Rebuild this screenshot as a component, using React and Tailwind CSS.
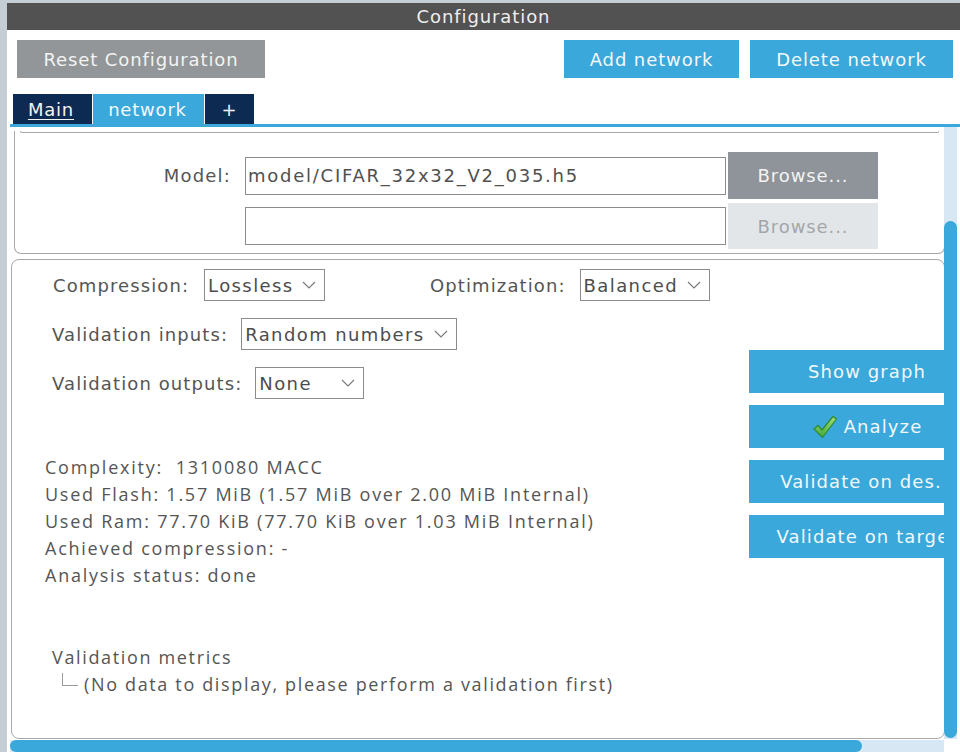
import React from "react";

const UI = { fontFamily: '"DejaVu Sans", sans-serif' };
const TXT = { fontFamily: '"Open Sans", "Noto Sans", sans-serif' };

function Chevron() {
  return (
    <svg width="14" height="8" viewBox="0 0 14 8" className="shrink-0">
      <polyline points="1,1 7,7 13,1" fill="none" stroke="#7a7a7a" strokeWidth="1.2" />
    </svg>
  );
}

function Select({ value, w }) {
  return (
    <div className={`flex items-center justify-between border border-[#8c8c8c] h-[32px] pl-[3px] pr-[8px] text-[18px] text-[#4d4d4d] tracking-[1.4px] ${w}`}>
      <span>{value}</span>
      <Chevron />
    </div>
  );
}

function Check() {
  return (
    <svg width="26" height="26" viewBox="0 0 26 26" className="shrink-0">
      <defs>
        <linearGradient id="cg" x1="0" y1="0" x2="0" y2="1">
          <stop offset="0" stopColor="#a6e07a" />
          <stop offset="1" stopColor="#3ea83a" />
        </linearGradient>
      </defs>
      <path
        d="M2 15 L6 11.5 L10 16 L21 2.5 L24.5 5 L10.5 23.5 Z"
        fill="url(#cg)"
        stroke="#2f8a2c"
        strokeWidth="1.2"
        strokeLinejoin="round"
      />
    </svg>
  );
}

function SideButton({ children, extra = "" }) {
  return (
    <div className={`w-[236px] h-[43px] bg-[#3aa8da] flex items-center justify-center gap-[6px] text-[18px] text-[#f2f8fc] tracking-[1.1px] shrink-0 whitespace-nowrap ${extra}`}>
      {children}
    </div>
  );
}

export default function App() {
  return (
    <div className="w-[960px] h-[752px] bg-[#c5ced5] pl-[7px] pt-[3px] flex flex-col overflow-hidden" style={UI}>
      <div className="h-[27px] bg-[#525252] text-[#eeeeee] text-[18px] tracking-[0.9px] flex items-center justify-center shrink-0">
        Configuration
      </div>
      <div className="flex-1 bg-white flex flex-col min-h-0">
        <div className="flex items-center mt-[10px] pl-[10px] pr-[7px] h-[38px] shrink-0">
          <div className="w-[248px] h-[38px] bg-[#929699] text-[#f3f3f3] text-[18px] tracking-[0.9px] flex items-center justify-center">
            Reset Configuration
          </div>
          <div className="flex-1" />
          <div className="w-[175px] h-[38px] bg-[#3aa8da] text-[#f3f8fc] text-[18px] tracking-[0.9px] flex items-center justify-center">
            Add network
          </div>
          <div className="w-[203px] h-[38px] bg-[#3aa8da] text-[#f3f8fc] text-[18px] tracking-[0.9px] flex items-center justify-center ml-[11px]">
            Delete network
          </div>
        </div>
        <div className="flex mt-[16px] ml-[6px] h-[30px] shrink-0 text-[18px] tracking-[0.8px]">
          <div className="w-[79px] bg-[#0c2a52] text-[#f3f3f3] flex items-center justify-center underline underline-offset-[3px] pr-[3px]">Main</div>
          <div className="w-[111px] ml-px bg-[#3aa8da] text-[#f3f8fc] flex items-center justify-center pr-[2px]">network</div>
          <div className="w-[49px] ml-px bg-[#0c2a52] text-[#f3f3f3] flex items-center justify-center">+</div>
        </div>
        <div className="h-[3px] ml-[3px] bg-[#3aa8da] shrink-0" />
        <div className="relative flex-1 ml-[3px] overflow-hidden">
          <div className="flex flex-col pt-[4px]">
            {/* first panel (partially scrolled) */}
            <div className="ml-[4px] w-[931px] h-[123px] border-x border-b border-[#a9a9a9] rounded-b-[7px] flex flex-col">
              <div className="mx-[5px] h-[2px] border-b border-x border-[#a9a9a9] rounded-b-[2px]" />
              <div className="flex items-center mt-[19px] h-[47px]">
                <div className="w-[216px] text-right text-[18px] text-[#555555] tracking-[1.2px]">Model:</div>
                <div className="ml-[14px] w-[481px] h-[38px] border border-[#8c8c8c] flex items-center pl-[2px] text-[18px] text-[#505050] tracking-[1.75px]">
                  model/CIFAR_32x32_V2_035.h5
                </div>
                <div className="ml-[2px] w-[150px] h-[47px] bg-[#8e9499] text-[#f3f3f3] text-[18px] tracking-[0.9px] flex items-center justify-center">
                  Browse...
                </div>
              </div>
              <div className="flex items-center mt-[4px] h-[46px]">
                <div className="w-[216px]" />
                <div className="ml-[14px] w-[481px] h-[38px] border border-[#8c8c8c]" />
                <div className="ml-[2px] w-[150px] h-[46px] bg-[#e3e6e9] text-[#a3a6a9] text-[18px] tracking-[0.9px] flex items-center justify-center">
                  Browse...
                </div>
              </div>
            </div>
            {/* second panel */}
            <div className="ml-[1px] mt-[5px] w-[934px] h-[480px] border border-[#a9a9a9] rounded-[8px] overflow-hidden flex">
              <div className="w-[737px] shrink-0 flex flex-col pt-[9px]">
                <div className="flex items-center h-[32px] pl-[41px] text-[18px] text-[#555555] tracking-[1.1px]">
                  <span>Compression:</span>
                  <div className="ml-[15px]"><Select value="Lossless" w="w-[121px]" /></div>
                  <span className="ml-[105px]">Optimization:</span>
                  <div className="ml-[14px]"><Select value="Balanced" w="w-[130px]" /></div>
                </div>
                <div className="flex items-center h-[32px] mt-[17px] pl-[40px] text-[18px] text-[#555555] tracking-[1.1px]">
                  <span>Validation inputs:</span>
                  <div className="ml-[13px]"><Select value="Random numbers" w="w-[216px]" /></div>
                </div>
                <div className="flex items-center h-[32px] mt-[17px] pl-[40px] text-[18px] text-[#555555] tracking-[1.1px]">
                  <span>Validation outputs:</span>
                  <div className="ml-[13px]"><Select value="None" w="w-[109px]" /></div>
                </div>
                <div className="mt-[55px] pl-[33px] text-[18px] leading-[27px] text-[#555555] tracking-[1.75px]" style={TXT}>
                  <div>Complexity:&nbsp; 1310080 MACC</div>
                  <div>Used Flash: 1.57 MiB (1.57 MiB over 2.00 MiB Internal)</div>
                  <div>Used Ram: 77.70 KiB (77.70 KiB over 1.03 MiB Internal)</div>
                  <div>Achieved compression: -</div>
                  <div>Analysis status: done</div>
                </div>
                <div className="mt-[55px] pl-[40px] text-[18px] leading-[27px] text-[#555555] tracking-[1.65px]" style={TXT}>
                  <div>Validation metrics</div>
                  <div className="flex items-center">
                    <span className="ml-[10px] w-[16px] h-[13px] border-l border-b border-[#9a9a9a] -mt-[10px] shrink-0" />
                    <span className="ml-[6px]">(No data to display, please perform a validation first)</span>
                  </div>
                </div>
              </div>
              <div className="flex flex-col gap-[12px] pt-[90px] shrink-0">
                <SideButton>Show graph</SideButton>
                <SideButton>
                  <Check />
                  <span>Analyze</span>
                </SideButton>
                <SideButton extra="pr-[12px]">Validate on des.</SideButton>
                <SideButton>Validate on target</SideButton>
              </div>
            </div>
          </div>
          {/* vertical scrollbar */}
          <div className="absolute top-0 left-[934px] w-[13px] h-[612px] bg-[#d7e7f4]">
            <div className="mt-[94px] h-[517px] bg-[#3aa8da] rounded-full" />
          </div>
          {/* horizontal scrollbar */}
          <div className="absolute left-0 top-[613px] w-[934px] h-[12px] bg-[#d7e7f4]">
            <div className="w-[852px] h-[12px] bg-[#3aa8da] rounded-full" />
          </div>
        </div>
      </div>
    </div>
  );
}
